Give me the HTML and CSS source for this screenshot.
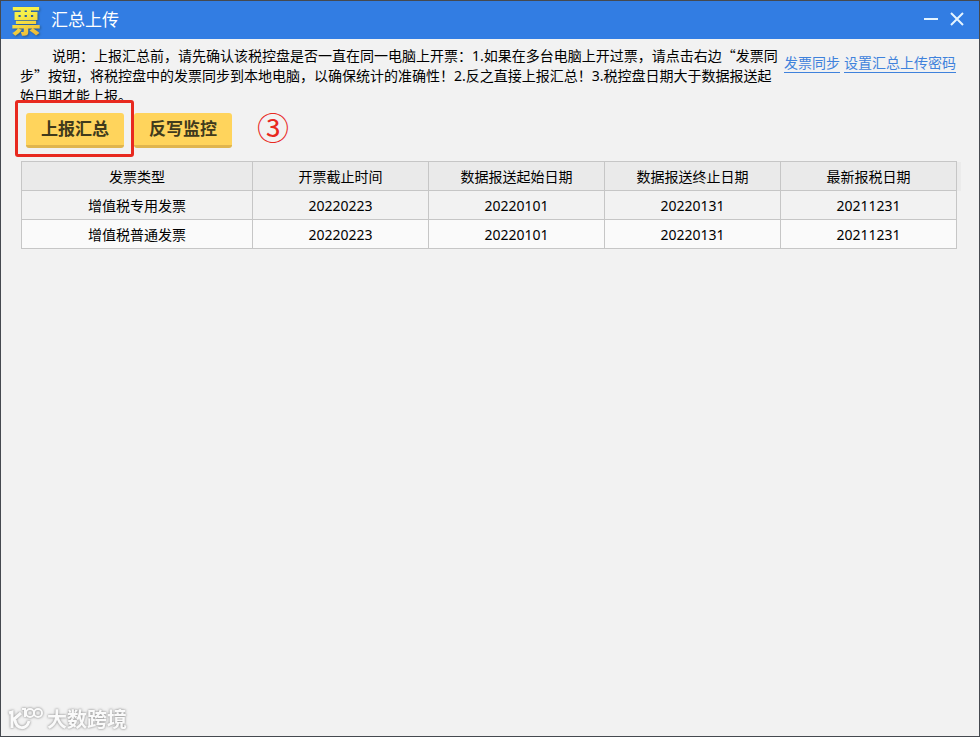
FILE: index.html
```html
<!DOCTYPE html>
<html lang="zh-CN">
<head>
  <meta charset="UTF-8">
  <meta name="viewport" content="width=device-width, initial-scale=1.0">
  <title>汇总上传</title>
  <link rel="stylesheet" href="styles.css">
</head>
<body>
  <div class="window">
    <header class="titlebar">
      <span class="logo">票</span>
      <h1>汇总上传</h1>
      <div class="window-controls">
        <button type="button" aria-label="最小化">
          <svg width="16" height="16" viewBox="0 0 16 16"><path d="M1 7H15" /></svg>
        </button>
        <button type="button" aria-label="关闭">
          <svg width="16" height="16" viewBox="0 0 16 16"><path d="M2 1L14 13M14 1L2 13" /></svg>
        </button>
      </div>
    </header>

    <main class="content">
      <div class="notice">
        <p>说明：上报汇总前，请先确认该税控盘是否一直在同一电脑上开票：1.如果在多台电脑上开过票，请点击右边<span class="quote">“</span>发票同步<span class="quote">”</span>按钮，将税控盘中的发票同步到本地电脑，以确保统计的准确性！2.反之直接上报汇总！3.税控盘日期大于数据报送起始日期才能上报。</p>
        <nav class="links">
          <a href="#">发票同步</a>
          <a href="#">设置汇总上传密码</a>
        </nav>
      </div>

      <div class="actions">
        <div class="marked">
          <button type="button" class="btn">上报汇总</button>
        </div>
        <button type="button" class="btn">反写监控</button>
        <span class="step">③</span>
      </div>

      <table class="report">
        <thead>
          <tr>
            <th class="type">发票类型</th>
            <th>开票截止时间</th>
            <th>数据报送起始日期</th>
            <th>数据报送终止日期</th>
            <th>最新报税日期</th>
          </tr>
        </thead>
        <tbody>
          <tr>
            <td>增值税专用发票</td>
            <td>20220223</td>
            <td>20220101</td>
            <td>20220131</td>
            <td>20211231</td>
          </tr>
          <tr>
            <td>增值税普通发票</td>
            <td>20220223</td>
            <td>20220101</td>
            <td>20220131</td>
            <td>20211231</td>
          </tr>
        </tbody>
      </table>
    </main>

    <footer class="watermark">
      <svg width="36" height="26" viewBox="0 0 36 26">
        <path d="M1 6L4 5V21M13 6L5 13M7 13C8 23 19 23 21 14" />
        <path class="thin" d="M14 2H17V10" />
        <circle cx="22" cy="6" r="4" />
        <circle cx="30" cy="6" r="4" />
      </svg>
      <span>大数跨境</span>
    </footer>
  </div>
</body>
</html>
```

FILE: styles.css
```css
* {
  box-sizing: border-box;
}

body {
  margin: 0;
  font-family: "Noto Sans", "Noto Sans CJK SC", sans-serif;
  font-size: 14px;
  line-height: 20px;
  color: #000;
}

.window {
  display: flex;
  flex-direction: column;
  min-height: 100vh;
  background-color: #f2f2f2;
  border: 1px solid #45494f;
}

/* title bar */
.titlebar {
  display: flex;
  align-items: center;
  height: 38px;
  padding: 0 14px 0 10px;
  background-color: #327de3;
  color: #fff;
}

.logo {
  width: 30px;
  height: 38px;
  font-family: "Noto Sans CJK SC", sans-serif;
  font-size: 30px;
  font-weight: 900;
  line-height: 36px;
  color: transparent;
  background: linear-gradient(160deg, #f6f04a 35%, #eeb535 90%);
  -webkit-background-clip: text;
  background-clip: text;
  filter: drop-shadow(1px 1px 1px #2a5a8c);
}

.titlebar h1 {
  margin: 0 auto 0 10px;
  font-size: 17px;
  font-weight: 400;
}

.window-controls {
  display: flex;
  gap: 10px;
}

.window-controls button {
  display: flex;
  padding: 0;
  background: none;
  border: none;
  cursor: pointer;
}

.window-controls svg {
  fill: none;
  stroke: #e4f4ff;
  stroke-width: 2;
}

/* content */
.content {
  flex: 1;
  padding: 7px 22px 0 20px;
}

.notice {
  display: flex;
  justify-content: space-between;
  height: 55px;
}

.notice p {
  flex: 1;
  margin: 0 5px 0 -1px;
  overflow: hidden;
  text-indent: 32px;
}

.quote {
  font-family: "Noto Sans CJK SC", sans-serif;
  line-height: 1;
}

.links {
  display: flex;
  gap: 4px;
  padding: 8px 1px 0 0;
}

.links a {
  height: 19px;
  line-height: 18px;
  color: #3f82dc;
  text-decoration: none;
  border-bottom: 1px solid #3f82dc;
}

.actions {
  display: flex;
  align-items: center;
  gap: 10px;
  padding: 12px 5px 13px;
}

.btn {
  width: 98px;
  height: 35px;
  padding: 0;
  font-family: inherit;
  font-size: 17px;
  font-weight: bold;
  line-height: 32px;
  color: #403a1c;
  background-color: #ffd45c;
  border: none;
  border-bottom: 3px solid #e0b54e;
  border-radius: 3px;
  cursor: pointer;
}

.marked {
  position: relative;
}

/* red frame round the first button */
.marked::after {
  content: "";
  position: absolute;
  inset: -13px -10px -9px -11px;
  border: 3px solid #e8291f;
  border-radius: 3px;
  pointer-events: none;
}

.step {
  height: 35px;
  margin-left: 15px;
  font-family: "Noto Sans CJK SC", sans-serif;
  font-size: 32px;
  line-height: 26px;
  color: #e8291f;
}

/* table */
.report {
  width: 100%;
  table-layout: fixed;
  border-collapse: collapse;
  text-align: center;
}

.report th,
.report td {
  height: 29px;
  padding: 2px 0 0;
  font-weight: normal;
  border: 1px solid #c6c6c6;
}

.report th {
  background-color: #eaeaea;
}

.report th:last-child {
  box-shadow: 4px 0 0 #ebebeb;
}

.report .type {
  width: 231px;
}

.report tbody tr:nth-child(even) {
  background-color: #fafafa;
}

.watermark {
  display: flex;
  align-items: center;
  gap: 3px;
  padding: 0 7px 2px;
  font-size: 20px;
  font-weight: bold;
  line-height: 28px;
  color: #fafafa;
  filter: drop-shadow(0 0 1px #999) drop-shadow(0 0 1px #ccc);
}

.watermark svg {
  fill: none;
  stroke: #fafafa;
  stroke-width: 3;
}

.watermark circle,
.watermark .thin {
  stroke-width: 2;
}
```
